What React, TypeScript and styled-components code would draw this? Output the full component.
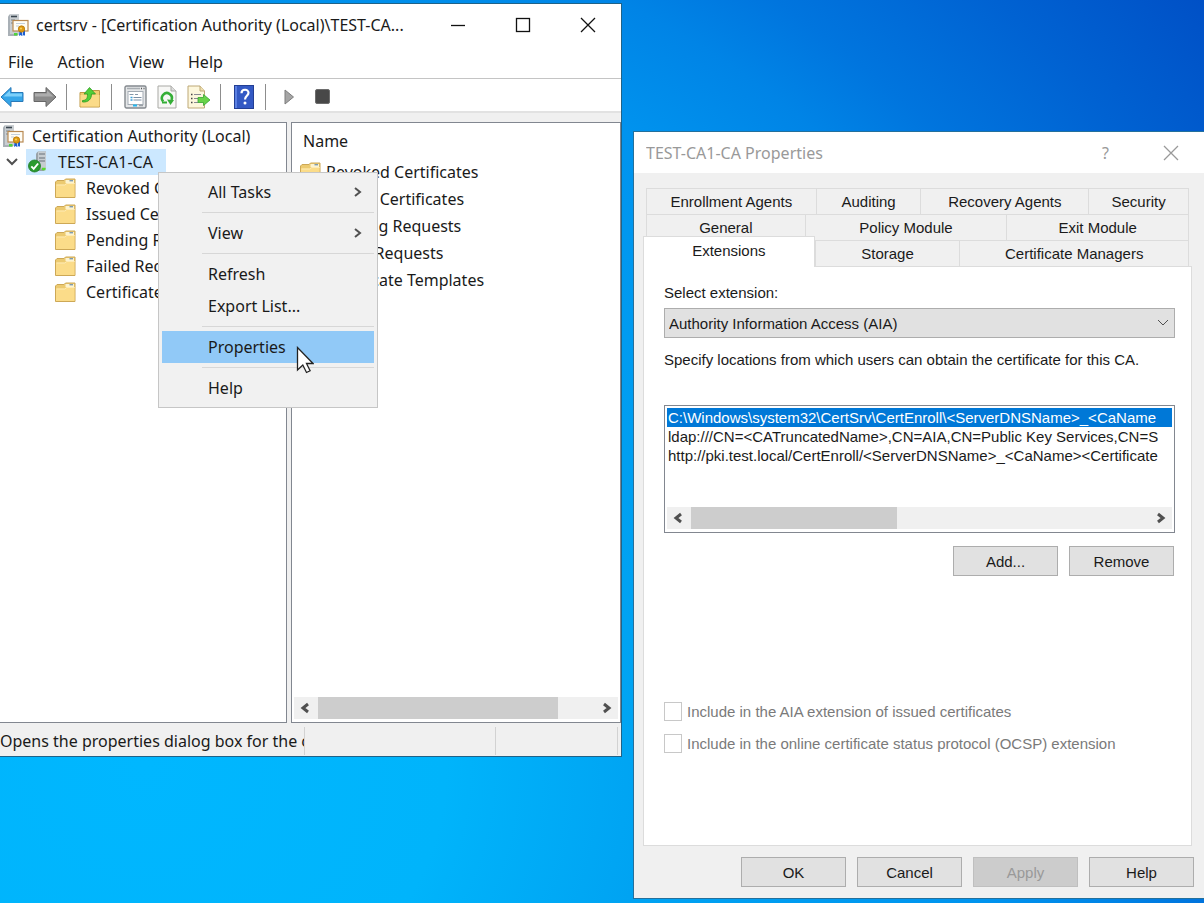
import React from "react";
import styled, { createGlobalStyle, css } from "styled-components";

const GlobalStyle = createGlobalStyle`
  * { box-sizing: border-box; }
  body { margin: 0; }
  button, input, select { font: inherit; color: inherit; }
`;

const uiFont = '"Noto Sans", "Open Sans", sans-serif';
const classicFont = '"Liberation Sans", Arial, sans-serif';

const Desktop = styled.main`
  display: grid;
  grid-template-columns: 622fr 571fr;
  column-gap: 11px;
  align-items: start;
  min-height: 100vh;
  padding-bottom: 4px;
  overflow: hidden;
  background: radial-gradient(
    ellipse 100% 120% at 12% 85%,
    #00b7ff 0%,
    #00b4fb 25%,
    #00a3f2 42%,
    #0093ee 71%,
    #0084e6 81%,
    #0075de 88%,
    #0062d2 100%,
    #0050c6 113%
  );
`;

/* ---------- Console window ---------- */

const ConsoleWindow = styled.section`
  position: relative;
  display: flex;
  flex-direction: column;
  min-width: 0;
  margin-top: 3px;
  border: 1px solid #1f6288;
  border-left: 0;
  background: #f0f0f0;
  color: #1a1a1a;
  font: 16px/24px ${uiFont};
  white-space: nowrap;
`;

const TitleBar = styled.header`
  display: flex;
  align-items: center;
  height: 41px;
  padding: 0 1px 0 7px;
  background: #fff;
`;

const Title = styled.h1`
  flex: 1;
  min-width: 0;
  margin: 0 0 0 7px;
  font-size: inherit;
  font-weight: 400;
  overflow: hidden;
`;

const CaptionButton = styled.button<{ $dim?: boolean }>`
  display: grid;
  place-items: center;
  width: 65px;
  height: 40px;
  padding: 0;
  border: 0;
  background: none;
  color: ${(p) => (p.$dim ? "#999" : "#111")};
`;

const MenuBar = styled.nav`
  display: flex;
  align-items: center;
  gap: 24px;
  height: 34px;
  padding-left: 8px;
  border-bottom: 1px solid #c4c4c4;
  background: #fff;
`;

const MenuBarItem = styled.button`
  padding: 0;
  border: 0;
  background: none;
`;

const ToolBar = styled.div`
  display: flex;
  align-items: center;
  gap: 9px;
  height: 34px;
  padding-top: 3px;
  border-bottom: 2px solid #e2e2e2;
  background: #fff;
`;

const ToolButton = styled.button`
  display: grid;
  place-items: center;
  width: 24px;
  height: 24px;
  padding: 0;
  border: 0;
  background: none;
`;

const ToolDivider = styled.span`
  width: 1px;
  height: 26px;
  margin-right: 2px;
  background: #8d8d8d;
`;

const ToolGroup = styled.div`
  display: flex;
  align-items: center;
  gap: 8px;
`;

const Panes = styled.div`
  display: grid;
  grid-template-columns: 287fr 330fr;
  column-gap: 4px;
  min-height: 601px;
  margin-top: 9px;
`;

const Pane = styled.div`
  display: flex;
  flex-direction: column;
  min-width: 0;
  border: 1px solid #828790;
  background: #fff;
  overflow: hidden;
`;

const TreePane = styled(Pane)`
  border-left: 0;
`;

const Tree = styled.ul`
  margin: 0;
  padding: 0;
  list-style: none;
`;

const TreeRow = styled.li<{ $level: number }>`
  display: flex;
  align-items: center;
  height: 26px;
  padding-left: ${(p) => [2, 6, 55][p.$level]}px;
`;

const TreeLabel = styled.span<{ $gap?: number }>`
  margin-left: ${(p) => p.$gap ?? 10}px;
`;

const SelectedNode = styled.span`
  display: flex;
  align-items: center;
  height: 26px;
  margin-left: 8px;
  padding: 0 13px 0 2px;
  background: #cce8ff;
`;

const ColumnHeader = styled.div`
  padding: 6px 0 5px 11px;
`;

const FileList = styled.ul`
  flex: 1;
  margin: 0;
  padding: 0 0 0 8px;
  list-style: none;
`;

const FileRow = styled.li`
  display: flex;
  align-items: center;
  gap: 5px;
  height: 27px;
`;

const ScrollBar = styled.div`
  display: grid;
  grid-template-columns: 24px 1fr 24px;
  height: 22px;
  margin: 0 2px 3px;
  background: #f0f0f0;
`;

const ScrollArrow = styled.button`
  display: grid;
  place-items: center;
  padding: 0;
  border: 0;
  background: none;
  color: #505050;
`;

const ScrollThumb = styled.span<{ $share: number }>`
  display: block;
  width: ${(p) => p.$share}%;
  height: 100%;
  background: #cdcdcd;
`;

const StatusBar = styled.footer`
  display: grid;
  grid-template-columns: 305fr 191fr 122fr;
  padding: 4px 3px 1px 0;
`;

const StatusCell = styled.span`
  height: 28px;
  border-right: 1px solid #d2d2d2;
  line-height: 28px;
  overflow: hidden;
`;

/* ---------- Context menu ---------- */

const ContextMenu = styled.div`
  position: absolute;
  left: 158px;
  top: 168px;
  width: 220px;
  padding: 3px;
  border: 1px solid #c6c6c6;
  background: #f1f1f1;
`;

const ContextItem = styled.button<{ $active?: boolean }>`
  display: flex;
  align-items: center;
  justify-content: space-between;
  width: 100%;
  height: 32px;
  padding: 0 11px 0 46px;
  border: 0;
  background: ${(p) => (p.$active ? "#91c9f7" : "none")};
`;

const ContextRule = styled.hr`
  height: 1px;
  margin: 4px 0 4px 40px;
  border: 0;
  background: #d7d7d7;
`;

const Pointer = styled.svg`
  position: absolute;
  left: 296px;
  top: 342px;
`;

/* ---------- Properties dialog ---------- */

const Dialog = styled.section`
  min-width: 0;
  margin-top: 131px;
  border: 1px solid #24709c;
  border-right: 0;
  background: #f0f0f0;
  color: #1a1a1a;
  font: 15px/19px ${classicFont};
`;

const DialogTitleBar = styled(TitleBar)`
  padding-left: 5px;
  color: #999;
  font: 16px/24px ${uiFont};
`;

const TabArea = styled.div`
  padding: 15px 12px 11px 9px;
`;

const TabRow = styled.div<{ $columns: string; $front?: boolean }>`
  display: grid;
  grid-template-columns: ${(p) => p.$columns};
  margin: ${(p) => (p.$front ? "0 3px 0 0" : "0 3px")};
  border-right: 1px solid #dcdcdc;
`;

const Tab = styled.button<{ $active?: boolean }>`
  height: 26px;
  padding: 0;
  border: 1px solid #dcdcdc;
  border-width: 1px 0 0 1px;
  background: #f0f0f0;
  ${(p) =>
    p.$active &&
    css`
      position: relative;
      height: 31px;
      margin: -4px 0 -1px;
      padding-bottom: 4px;
      border-right-width: 1px;
      background: #fff;
    `}
`;

const TabPage = styled.div`
  min-height: 580px;
  padding: 16px 16px 0 20px;
  border: 1px solid #dcdcdc;
  background: #fff;
`;

const FieldLabel = styled.label`
  display: block;
  margin-bottom: 6px;
`;

const SelectBox = styled.div`
  display: grid;
  align-items: center;
  margin-bottom: 12px;
  & > * {
    grid-area: 1 / 1;
  }
  & > svg {
    justify-self: end;
    margin-right: 6px;
    pointer-events: none;
  }
`;

const Select = styled.select`
  appearance: none;
  width: 100%;
  height: 30px;
  padding: 0 4px;
  border: 1px solid #adadad;
  border-radius: 0;
  background: #e1e1e1;
`;

const Hint = styled.p`
  margin: 0 0 36px;
  white-space: nowrap;
`;

const ListBox = styled.div`
  display: flex;
  flex-direction: column;
  height: 128px;
  padding-top: 2px;
  border: 1px solid #828790;
`;

const Options = styled.ul`
  flex: 1;
  margin: 0 2px;
  padding: 0;
  list-style: none;
  overflow: hidden;
  white-space: nowrap;
`;

const Option = styled.li<{ $selected?: boolean }>`
  padding-left: 1px;
  ${(p) =>
    p.$selected &&
    css`
      background: #0078d7;
      color: #fff;
    `}
`;

const ButtonRow = styled.div<{ $inset?: boolean }>`
  display: flex;
  justify-content: flex-end;
  gap: 11px;
  padding: ${(p) => (p.$inset ? "13px 1px 126px 0" : "0 10px 11px 0")};
`;

const PushButton = styled.button`
  width: 105px;
  height: 30px;
  padding: 0;
  border: 1px solid #adadad;
  background: #e1e1e1;
  &:disabled {
    border-color: #bfbfbf;
    background: #ccc;
    color: #999;
  }
`;

const CheckRow = styled.label`
  display: flex;
  align-items: center;
  gap: 5px;
  margin-bottom: 13px;
  color: #7a7a7a;
  white-space: nowrap;
`;

const CheckBox = styled.input`
  appearance: none;
  width: 18px;
  height: 19px;
  margin: 0;
  border: 1px solid #c8c8c8;
  background: #fff;
`;

/* ---------- Icons ---------- */

const AuthorityIcon = () => (
  <svg width="22" height="24" viewBox="0 0 22 24" aria-hidden="true">
    <path d="M1 3.5 3 1h9v20l-2 2H1z" fill="#a9b0b6" />
    <path d="M3 1h9v20H3z" fill="#c9ced2" />
    <path d="M4 3.5h6" stroke="#3a4650" strokeWidth="1.6" />
    <path d="M4 7h4M4 10h3" stroke="#7c868e" strokeWidth="1.2" />
    <rect x="6" y="7.5" width="15" height="10.5" fill="#fffdf5" stroke="#b98a52" strokeWidth="1.2" />
    <path d="M9 10.5h9M9 13h3" stroke="#c3d0dc" strokeWidth="1.2" />
    <path d="M12.500 17h2.500v6l-1.500-1-1.500 1zM16 17h2v6l-1-1-1.500 1z" fill="#1d5fd0" />
    <circle cx="14.500" cy="16" r="3.200" fill="#dd9a12" stroke="#b87808" strokeWidth=".8" />
    <circle cx="14" cy="15.500" r="1.100" fill="#f7cf5a" />
    <rect x="7" y="20" width="3.500" height="2.500" fill="#4fd43c" />
  </svg>
);

const ServerOkIcon = () => (
  <svg width="20" height="24" viewBox="0 0 20 24" aria-hidden="true">
    <path d="m8 3.500 2-2h8v17l-2 2.500H8z" fill="#9aa3a9" />
    <path d="M10 1.500h8v17h-8z" fill="#c6ccd0" />
    <path d="M11 4h6M11 8h6M11 11h6" stroke="#66717a" strokeWidth="1.200" />
    <path d="M14 19h3.500" stroke="#56dc2f" strokeWidth="2.500" />
    <circle cx="6.500" cy="16" r="6" fill="#2b9a2f" stroke="#1c7a24" strokeWidth=".8" />
    <path d="m3.300 16.300 2.400 2.500 4.400-5.300" fill="none" stroke="#fff" strokeWidth="1.900" />
  </svg>
);

const FolderIcon = () => (
  <svg width="21" height="20" viewBox="0 0 21 20" aria-hidden="true">
    <path d="M.5 4 2 2.500h7L10.500 1H20v18.500H.5z" fill="#ecca70" stroke="#cda856" />
    <path d="M10.500 2h8.500v3h-8.500z" fill="#fdf3cf" />
    <path d="M14.500 2.700h3.500" stroke="#7d9bb0" strokeWidth="1.400" />
    <path d="M1 6.500h8.500L11.500 5h8v14H1z" fill="#fbdc89" />
    <path d="M1.500 7h8.200l2-1.500h8" fill="none" stroke="#ffefc0" strokeWidth=".8" />
  </svg>
);

const ArrowIcon = ({ back = false }: { back?: boolean }) => (
  <svg width="24" height="22" viewBox="0 0 24 22" aria-hidden="true">
    <path
      d={back ? "M1 11 11 1.500v5h12v9H11v5z" : "M23 11 13 1.500v5H1v9h12v5z"}
      fill={back ? "#35a5e8" : "#8b8b8b"}
      stroke={back ? "#2879b8" : "#666"}
      strokeLinejoin="round"
    />
    <path
      d={back ? "M3.500 10.500 10 4.500v3h12v3z" : "M2 7.500h12v-3l6.500 6H2z"}
      fill={back ? "#7dd0fa" : "#adadad"}
    />
  </svg>
);

const UpFolderIcon = () => (
  <svg width="22" height="22" viewBox="0 0 22 22" aria-hidden="true">
    <path d="M1 6.500h7l2-2h10.500v16.500H1z" fill="#f1cd70" stroke="#bf9845" />
    <path d="M1.500 9h19v11.500h-19z" fill="#fbdb88" />
    <path
      d="M3.500 14.500c4.500 0 5-3 5-6.500H5L10.500 1.500 16.500 8H12.500c0 5-3 8.500-9 8z"
      fill="#52cf38"
      stroke="#2f9a26"
      strokeWidth=".8"
    />
  </svg>
);

const PropertiesIcon = () => (
  <svg width="23" height="24" viewBox="0 0 23 24" aria-hidden="true">
    <rect x="1" y="1" width="21" height="22" rx="1.500" fill="#e4e6e8" stroke="#84898e" strokeWidth="1.400" />
    <path d="M3 3.500h13" stroke="#a8adb2" strokeWidth="1.500" />
    <path d="M17 3.500h1M19.500 3.500h1" stroke="#555" strokeWidth="1.500" />
    <rect x="4" y="6.500" width="15" height="13" fill="#fff" stroke="#a3abb3" />
    <path d="M5.500 9.500h4M11 9.500h3" stroke="#8496a8" />
    <path d="M6.500 12.500h2M6.500 15h2" stroke="#3d9fd8" strokeWidth="1.400" />
    <path d="M9.500 12.500h8M9.500 15h8" stroke="#7b8fa5" />
    <path d="M9 20.500h4" stroke="#24b7ee" strokeWidth="2" />
    <path d="M15 20.500h4" stroke="#9aa0a6" strokeWidth="1.500" />
  </svg>
);

const RefreshIcon = () => (
  <svg width="20" height="24" viewBox="0 0 20 24" aria-hidden="true">
    <path d="M1 1h13l5 5v17H1z" fill="#f7f7f5" stroke="#a9a9a5" />
    <path d="M14 1v5h5" fill="#ddd" stroke="#a9a9a5" />
    <path d="M6.200 16.500a5 5 0 1 1 8.300-1.500" fill="none" stroke="#34ae36" strokeWidth="2.600" />
    <path d="m10 14.500 7 .5-3.500 5z" fill="#34ae36" />
    <path d="M5 17.500h5" stroke="#34ae36" strokeWidth="2" />
  </svg>
);

const ExportIcon = () => (
  <svg width="24" height="24" viewBox="0 0 24 24" aria-hidden="true">
    <path d="M1 1h12l4.500 5v17H1z" fill="#fdf7dc" stroke="#bda877" />
    <path d="M13 1v5h4.500" fill="#eee0b0" stroke="#bda877" />
    <path d="M4 9.500h1.500M4 13.500h1.500M4 17.500h1.500" stroke="#444" strokeWidth="1.500" />
    <path d="M7 9.500h7M7 13.500h4M7 17.500h4" stroke="#8a8a92" strokeWidth="1.200" />
    <path d="M11 12.500h5.500V9.500l6.500 5.500-6.500 5.500v-3H11z" fill="#68d349" stroke="#35a52e" strokeWidth=".8" />
  </svg>
);

const HelpIcon = () => (
  <svg width="20" height="24" viewBox="0 0 20 24" aria-hidden="true">
    <rect x=".5" y=".5" width="19" height="23" fill="#3359c4" stroke="#233f94" />
    <path d="M2 1v22" stroke="#5b80e2" strokeWidth="2" />
    <path
      d="M7.500 8.200c0-4.500 7-4.500 7-.4 0 3-3.500 3-3.500 6.700"
      fill="none"
      stroke="#fff"
      strokeWidth="2.200"
    />
    <circle cx="11" cy="18" r="1.500" fill="#fff" />
  </svg>
);

const PlayIcon = () => (
  <svg width="12" height="18" viewBox="0 0 12 18" aria-hidden="true">
    <path d="M2 2v14l8.500-7z" fill="#a5a5a5" stroke="#7d7d7d" strokeLinejoin="round" />
  </svg>
);

const StopIcon = () => (
  <svg width="15" height="15" viewBox="0 0 15 15" aria-hidden="true">
    <rect x=".5" y=".5" width="14" height="14" rx="1.500" fill="#484848" stroke="#6d6d6d" />
  </svg>
);

type Direction = "left" | "right" | "down";
const chevrons: Record<Direction, string> = {
  left: "M8 2 3 6l5 4",
  right: "M4 2l5 4-5 4",
  down: "M1 3l5 5 5-5",
};

const Chevron = ({ to, weight = 2 }: { to: Direction; weight?: number }) => (
  <svg width="12" height="12" viewBox="0 0 12 12" aria-hidden="true">
    <path d={chevrons[to]} fill="none" stroke="#505050" strokeWidth={weight} />
  </svg>
);

const CloseGlyph = () => (
  <svg width="16" height="16" viewBox="0 0 16 16" aria-hidden="true">
    <path d="m1 1 14 14M15 1 1 15" stroke="currentColor" strokeWidth="1.300" />
  </svg>
);

/* ---------- Content ---------- */

const folders = [
  "Revoked Certificates",
  "Issued Certificates",
  "Pending Requests",
  "Failed Requests",
  "Certificate Templates",
];

const locations = [
  "C:\\Windows\\system32\\CertSrv\\CertEnroll\\<ServerDNSName>_<CaName",
  "ldap:///CN=<CATruncatedName>,CN=AIA,CN=Public Key Services,CN=S",
  "http://pki.test.local/CertEnroll/<ServerDNSName>_<CaName><Certificate",
];

const HorizontalScroll = ({ share }: { share: number }) => (
  <ScrollBar>
    <ScrollArrow aria-label="Scroll left">
      <Chevron to="left" weight={3} />
    </ScrollArrow>
    <span>
      <ScrollThumb $share={share} />
    </span>
    <ScrollArrow aria-label="Scroll right">
      <Chevron to="right" weight={3} />
    </ScrollArrow>
  </ScrollBar>
);

const CertificationConsole = () => (
  <ConsoleWindow>
    <TitleBar>
      <AuthorityIcon />
      <Title>certsrv - [Certification Authority (Local)\TEST-CA...</Title>
      <CaptionButton aria-label="Minimize">
        <svg width="16" height="16" aria-hidden="true">
          <path d="M1 8.500h14" stroke="currentColor" strokeWidth="1.300" />
        </svg>
      </CaptionButton>
      <CaptionButton aria-label="Maximize">
        <svg width="16" height="16" aria-hidden="true">
          <rect x="1.500" y="1.500" width="13" height="13" fill="none" stroke="currentColor" strokeWidth="1.300" />
        </svg>
      </CaptionButton>
      <CaptionButton aria-label="Close">
        <CloseGlyph />
      </CaptionButton>
    </TitleBar>

    <MenuBar>
      {["File", "Action", "View", "Help"].map((name) => (
        <MenuBarItem key={name}>{name}</MenuBarItem>
      ))}
    </MenuBar>

    <ToolBar>
      <ToolButton aria-label="Back"><ArrowIcon back /></ToolButton>
      <ToolButton aria-label="Forward"><ArrowIcon /></ToolButton>
      <ToolDivider />
      <ToolButton aria-label="Up one level"><UpFolderIcon /></ToolButton>
      <ToolDivider />
      <ToolGroup>
        <ToolButton aria-label="Properties"><PropertiesIcon /></ToolButton>
        <ToolButton aria-label="Refresh"><RefreshIcon /></ToolButton>
        <ToolButton aria-label="Export list"><ExportIcon /></ToolButton>
      </ToolGroup>
      <ToolDivider />
      <ToolButton aria-label="Help"><HelpIcon /></ToolButton>
      <ToolDivider />
      <ToolButton aria-label="Start service"><PlayIcon /></ToolButton>
      <ToolButton aria-label="Stop service"><StopIcon /></ToolButton>
    </ToolBar>

    <Panes>
      <TreePane>
        <Tree>
          <TreeRow $level={0}>
            <AuthorityIcon />
            <TreeLabel $gap={8}>Certification Authority (Local)</TreeLabel>
          </TreeRow>
          <TreeRow $level={1}>
            <Chevron to="down" />
            <SelectedNode>
              <ServerOkIcon />
              <TreeLabel>TEST-CA1-CA</TreeLabel>
            </SelectedNode>
          </TreeRow>
          {folders.map((name) => (
            <TreeRow key={name} $level={2}>
              <FolderIcon />
              <TreeLabel>{name}</TreeLabel>
            </TreeRow>
          ))}
        </Tree>
      </TreePane>
      <Pane>
        <ColumnHeader>Name</ColumnHeader>
        <FileList>
          {folders.map((name) => (
            <FileRow key={name}>
              <FolderIcon />
              {name}
            </FileRow>
          ))}
        </FileList>
        <HorizontalScroll share={87} />
      </Pane>
    </Panes>

    <StatusBar>
      <StatusCell>Opens the properties dialog box for the c</StatusCell>
      <StatusCell />
      <StatusCell />
    </StatusBar>

    <ContextMenu role="menu">
      <ContextItem role="menuitem">All Tasks <Chevron to="right" /></ContextItem>
      <ContextRule />
      <ContextItem role="menuitem">View <Chevron to="right" /></ContextItem>
      <ContextRule />
      <ContextItem role="menuitem">Refresh</ContextItem>
      <ContextItem role="menuitem">Export List...</ContextItem>
      <ContextRule />
      <ContextItem role="menuitem" $active>Properties</ContextItem>
      <ContextRule />
      <ContextItem role="menuitem">Help</ContextItem>
    </ContextMenu>
    <Pointer width="18" height="28" viewBox="0 0 18 28" aria-hidden="true">
      <path
        d="M1.500 1.500v22.500l5.300-5 3.700 7.500 3.600-1.700-3.600-7.300h6.500z"
        fill="#fff"
        stroke="#222"
        strokeWidth="1.300"
      />
    </Pointer>
  </ConsoleWindow>
);

const PropertiesDialog = () => (
  <Dialog role="dialog" aria-labelledby="dialog-title">
    <DialogTitleBar>
      <Title id="dialog-title">TEST-CA1-CA Properties</Title>
      <CaptionButton $dim aria-label="What is this">?</CaptionButton>
      <CaptionButton $dim aria-label="Close"><CloseGlyph /></CaptionButton>
    </DialogTitleBar>

    <TabArea role="tablist">
      <TabRow $columns="170fr 105fr 168fr 100fr">
        <Tab role="tab">Enrollment Agents</Tab>
        <Tab role="tab">Auditing</Tab>
        <Tab role="tab">Recovery Agents</Tab>
        <Tab role="tab">Security</Tab>
      </TabRow>
      <TabRow $columns="159fr 202fr 182fr">
        <Tab role="tab">General</Tab>
        <Tab role="tab">Policy Module</Tab>
        <Tab role="tab">Exit Module</Tab>
      </TabRow>
      <TabRow $columns="172fr 145fr 229fr" $front>
        <Tab role="tab" aria-selected $active>Extensions</Tab>
        <Tab role="tab">Storage</Tab>
        <Tab role="tab">Certificate Managers</Tab>
      </TabRow>

      <TabPage role="tabpanel">
        <FieldLabel htmlFor="extension">Select extension:</FieldLabel>
        <SelectBox>
          <Select id="extension">
            <option>Authority Information Access (AIA)</option>
          </Select>
          <Chevron to="down" weight={1} />
        </SelectBox>
        <Hint>Specify locations from which users can obtain the certificate for this CA.</Hint>
        <ListBox>
          <Options role="listbox" aria-label="Locations">
            {locations.map((location, index) => (
              <Option key={location} role="option" aria-selected={index === 0} $selected={index === 0}>
                {location}
              </Option>
            ))}
          </Options>
          <HorizontalScroll share={45} />
        </ListBox>
        <ButtonRow $inset>
          <PushButton>Add...</PushButton>
          <PushButton>Remove</PushButton>
        </ButtonRow>
        <CheckRow>
          <CheckBox type="checkbox" disabled />
          Include in the AIA extension of issued certificates
        </CheckRow>
        <CheckRow>
          <CheckBox type="checkbox" disabled />
          Include in the online certificate status protocol (OCSP) extension
        </CheckRow>
      </TabPage>
    </TabArea>

    <ButtonRow>
      <PushButton>OK</PushButton>
      <PushButton>Cancel</PushButton>
      <PushButton disabled>Apply</PushButton>
      <PushButton>Help</PushButton>
    </ButtonRow>
  </Dialog>
);

export default function App() {
  return (
    <>
      <GlobalStyle />
      <Desktop>
        <CertificationConsole />
        <PropertiesDialog />
      </Desktop>
    </>
  );
}
